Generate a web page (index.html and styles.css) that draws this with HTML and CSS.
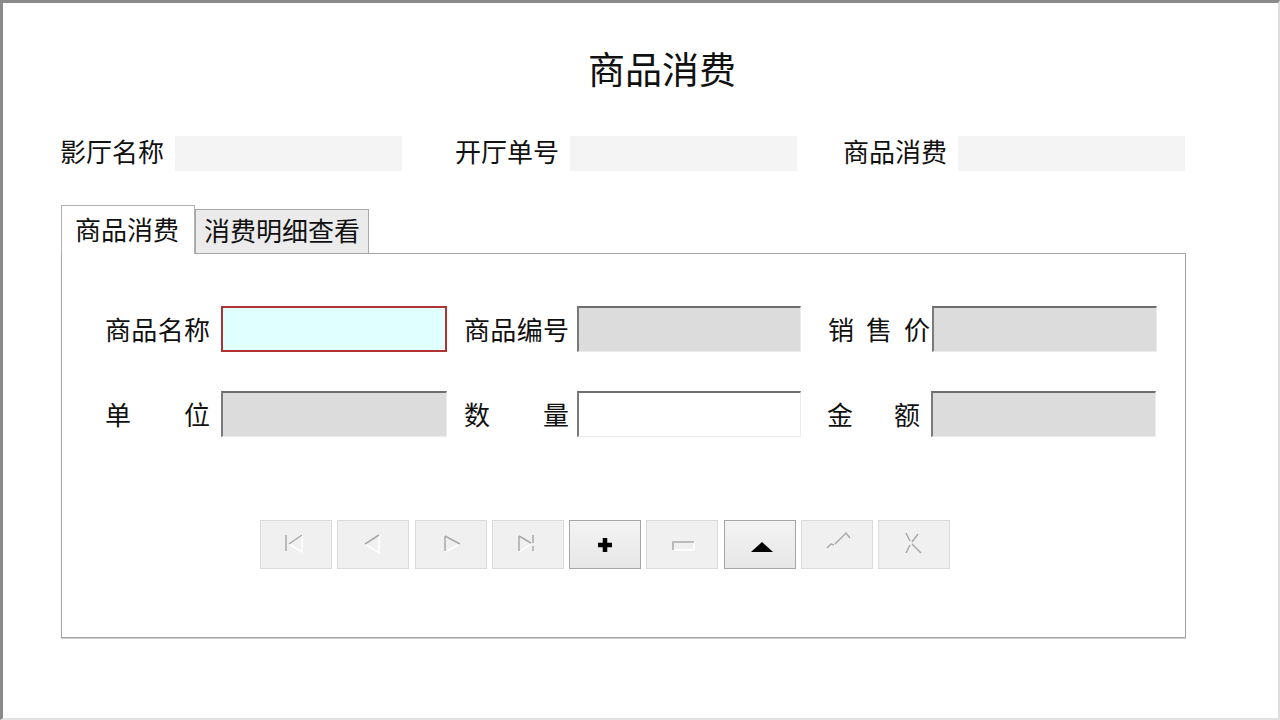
FILE: index.html
```html
<!DOCTYPE html>
<html lang="zh-CN">
<head>
    <meta charset="UTF-8">
    <title>商品消费</title>
    <link rel="stylesheet" href="styles.css">
</head>
<body>
    <div class="frame">
        <h1 class="title">商品消费</h1>

        <!-- top info -->
        <div class="head-row">
            <div class="head-field">
                <span class="head-label">影厅名称</span>
                <span class="head-box"></span>
            </div>
            <div class="head-field">
                <span class="head-label">开厅单号</span>
                <span class="head-box"></span>
            </div>
            <div class="head-field">
                <span class="head-label">商品消费</span>
                <span class="head-box"></span>
            </div>
        </div>

        <!-- tabs -->
        <div class="tabs">
            <div class="tab tab-active">商品消费</div>
            <div class="tab">消费明细查看</div>
        </div>

        <div class="panel">
            <div class="form-row">
                <div class="cell c1">
                    <label class="lbl">商品名称</label>
                    <input type="text" class="field field-focus">
                </div>
                <div class="cell c2">
                    <label class="lbl">商品编号</label>
                    <input type="text" class="field field-off" disabled>
                </div>
                <div class="cell c3">
                    <label class="lbl">销 售 价</label>
                    <input type="text" class="field field-off" disabled>
                </div>
            </div>
            <div class="form-row row-2">
                <div class="cell c1">
                    <label class="lbl">单 位</label>
                    <input type="text" class="field field-off" disabled>
                </div>
                <div class="cell c2">
                    <label class="lbl">数 量</label>
                    <input type="text" class="field field-on">
                </div>
                <div class="cell c3">
                    <label class="lbl lbl-short">金 额</label>
                    <input type="text" class="field field-off" disabled>
                </div>
            </div>

            <!-- record navigator -->
            <div class="nav">
                <button class="nav-btn" disabled>
                    <svg width="70" height="47" viewBox="0 0 70 47">
                        <path d="M41 14 L41 31 L28 23" fill="none" stroke="#fff" stroke-width="1.5"/>
                        <path d="M25 14 L25 30 M28 23 L41 14" fill="none" stroke="#a9a9a9" stroke-width="1.5"/>
                    </svg>
                </button>
                <button class="nav-btn" disabled>
                    <svg width="70" height="47" viewBox="0 0 70 47">
                        <path d="M41 14 L41 32 L27 23" fill="none" stroke="#fff" stroke-width="1.5"/>
                        <path d="M27 23 L41 14" fill="none" stroke="#a9a9a9" stroke-width="1.5"/>
                    </svg>
                </button>
                <button class="nav-btn" disabled>
                    <svg width="70" height="47" viewBox="0 0 70 47">
                        <path d="M29 31 L44 23" fill="none" stroke="#fff" stroke-width="1.5"/>
                        <path d="M29 15 L29 30 M29 15 L44 23" fill="none" stroke="#a9a9a9" stroke-width="1.5"/>
                    </svg>
                </button>
                <button class="nav-btn" disabled>
                    <svg width="70" height="47" viewBox="0 0 70 47">
                        <path d="M26 31 L38 23" fill="none" stroke="#fff" stroke-width="1.5"/>
                        <path d="M26 15 L26 30 M26 15 L38 22 M40 14 L40 22 M40 25 L40 30" fill="none" stroke="#a9a9a9" stroke-width="1.5"/>
                    </svg>
                </button>
                <button class="nav-btn nav-on">
                    <svg width="70" height="47" viewBox="0 0 70 47">
                        <path d="M35 17 L35 31 M28 24 L42 24" fill="none" stroke="#000" stroke-width="4.5"/>
                    </svg>
                </button>
                <button class="nav-btn" disabled>
                    <svg width="70" height="47" viewBox="0 0 70 47">
                        <path d="M47 21 L47 29 L26 29" fill="none" stroke="#fff" stroke-width="1.5"/>
                        <path d="M26 29 L26 21 L47 21" fill="none" stroke="#a9a9a9" stroke-width="1.5"/>
                    </svg>
                </button>
                <button class="nav-btn nav-on">
                    <svg width="70" height="47" viewBox="0 0 70 47">
                        <path d="M26 31 L37 21 L48 31 Z" fill="#000"/>
                    </svg>
                </button>
                <button class="nav-btn" disabled>
                    <svg width="70" height="47" viewBox="0 0 70 47">
                        <path d="M25 27 L29 23 L32 24 M33 23 L44 12 L48 17" fill="none" stroke="#a9a9a9" stroke-width="1.5"/>
                    </svg>
                </button>
                <button class="nav-btn" disabled>
                    <svg width="70" height="47" viewBox="0 0 70 47">
                        <path d="M27 12 L31 20 M33 23 L42 32 M39 13 L33 21 M31 24 L27 32" fill="none" stroke="#a9a9a9" stroke-width="1.5"/>
                    </svg>
                </button>
            </div>
        </div>
    </div>
</body>
</html>
```

FILE: styles.css
```css
/* shopping consumption form */
* {
    margin: 0;
    padding: 0;
    box-sizing: border-box;
}
body {
    background-color: #fff;
    font-family: "Noto Sans CJK SC", sans-serif;
    color: #111;
}
.frame {
    width: 1280px;
    height: 720px;
    border-top: 3px solid #8a8a8a;
    border-left: 3px solid #8a8a8a;
    border-right: 2px solid #dedede;
    border-bottom: 2px solid #e2e2e2;
    padding: 47px 0 0 57px;
}
.title {
    font-size: 37px;
    font-weight: normal;
    line-height: 37px;
    padding-left: 528px;
}

/* top info */
.head-row {
    display: grid;
    grid-template-columns: 395px 388px auto;
    margin-top: 49px;
}
.head-field {
    display: flex;
    align-items: center;
}
.head-label {
    font-size: 26px;
    line-height: 26px;
    width: 105px;
    margin-right: 10px;
    margin-bottom: 5px;
}
.head-box {
    display: block;
    width: 227px;
    height: 35px;
    background-color: #f4f4f4;
}

/* tabs */
.tabs {
    display: flex;
    align-items: flex-end;
    margin-top: 34px;
    margin-left: 1px;
}
.tab {
    height: 44px;
    padding: 7px 8px 0 8px;
    font-size: 26px;
    line-height: 26px;
    background-color: #ebebeb;
    border: 1px solid #a8a8a8;
    border-bottom: none;
}
.tab-active {
    position: relative;
    z-index: 1;
    height: 49px;
    margin-bottom: -1px;
    padding: 10px 15px 0 13px;
    background-color: #fff;
    border-color: #b0b0b0;
}
.panel {
    width: 1125px;
    height: 385px;
    margin-left: 1px;
    border: 1px solid #a4a4a4;
    box-shadow: 0 1px 0 #cfcfcf;
    padding: 52px 0 0 43px;
}

/* form rows */
.form-row {
    display: flex;
    align-items: center;
}
.row-2 {
    margin-top: 39px;
}
.cell {
    display: flex;
    align-items: center;
}
.lbl {
    font-size: 26px;
    line-height: 26px;
    text-align: justify;
    text-align-last: justify;
}
.c1 .lbl {
    width: 105px;
    margin-right: 11px;
}
.c2 {
    margin-left: 17px;
}
.c2 .lbl {
    width: 105px;
    margin-right: 8px;
}
.c3 {
    margin-left: 27px;
}
.c3 .lbl {
    width: 102px;
    margin-right: 2px;
}
.c3 .lbl-short {
    width: 93px;
    margin-right: 11px;
    margin-left: -1px;
}
.field {
    height: 46px;
    font-size: 20px;
    outline: none;
}
.c1 .field {
    width: 226px;
}
.c2 .field {
    width: 224px;
}
.c3 .field {
    width: 225px;
}
.field-focus {
    background-color: #e0ffff;
    border: 2px solid #b23232;
}
.field-off,
.field-on {
    border-top: 2px solid #6e6e6e;
    border-left: 2px solid #7a7a7a;
    border-right: 1px solid #ececec;
    border-bottom: 1px solid #ececec;
}
.field-off {
    background-color: #dcdcdc;
}
.field-on {
    background-color: #fff;
}

/* navigator buttons */
.nav {
    display: flex;
    gap: 5.25px;
    margin-top: 83px;
    padding-left: 155px;
}
.nav-btn {
    width: 72px;
    height: 49px;
    border: 1px solid #dadada;
    background-color: #f0f0f0;
    display: flex;
    align-items: center;
    justify-content: center;
}
.nav-btn svg {
    display: block;
}
.nav-on {
    border-color: #a6a6a6;
    background: linear-gradient(#f3f3f3, #e7e7e7);
}
```
